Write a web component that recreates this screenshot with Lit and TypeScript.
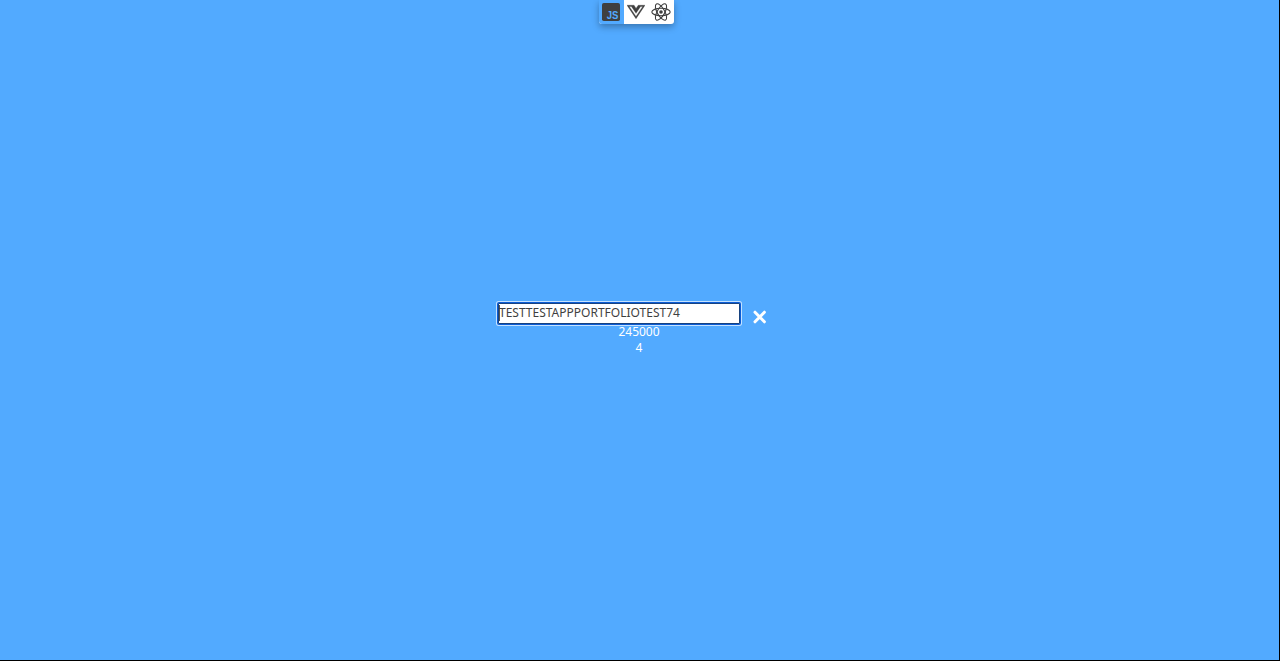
import { LitElement, html, css } from "lit";
import { customElement, property } from "lit/decorators.js";

@customElement("framework-switch")
class FrameworkSwitch extends LitElement {
  static styles = css`
    :host { display: flex; width: 75px; height: 24px; border-radius: 0 0 3px 3px; box-shadow: 0 3px 7px rgba(0, 0, 0, 0.3); background: #fff; }
    .tab { box-sizing: border-box; width: 25px; height: 24px; padding-right: 1px; display: flex; align-items: center; justify-content: center; color: #3f3f3f; }
    .active { background: #52aaff; border-radius: 0 0 0 3px; }
    .js { width: 18px; height: 18px; }
    .vue { width: 18px; height: 18px; }
    .react { width: 20px; height: 20px; }
    .letters { font: bold 10.5px "Liberation Sans", Arial, sans-serif; fill: #52aaff; }
  `;
  render() {
    return html`
      <div class="tab active">
        <svg class="js" viewBox="0 0 18 18"><rect width="18" height="18" rx="1.8" fill="currentColor" /><text class="letters" transform="translate(4.7 16.2) scale(0.91 1)">JS</text></svg>
      </div>
      <div class="tab">
        <svg class="vue" viewBox="0 0 448 512" fill="currentColor" stroke="currentColor" stroke-width="9" preserveAspectRatio="none"><path d="M356.9 64.3H280l-56 88.6-48-88.6H0L224 448 448 64.3h-91.1zm-301.2 32h53.8L224 294.5 338.4 96.3h53.8L224 384.5 55.7 96.3z" /></svg>
      </div>
      <div class="tab">
        <svg class="react" viewBox="-10 -10 20 20" fill="none" stroke="currentColor" stroke-width="1.1">
          <ellipse rx="9.2" ry="3.7" /><ellipse rx="9.2" ry="3.7" transform="rotate(60)" /><ellipse rx="9.2" ry="3.7" transform="rotate(120)" />
          <circle r="1.8" fill="currentColor" stroke="none" />
        </svg>
      </div>`;
  }
}

@customElement("stock-entry")
class StockEntry extends LitElement {
  @property() name = "";
  @property({ type: Number }) amount = 0;
  @property({ type: Number }) count = 0;
  static styles = css`
    :host { display: grid; grid-template-columns: 242px 34px; color: #fff; font: 12px/16px "Noto Sans", sans-serif; text-align: center; }
    .field { box-sizing: border-box; width: 242px; height: 21px; margin: 0; padding: 0 0 2px; border: 1px solid #17427f; border-radius: 1px; outline: none; font: inherit; color: #3f3f3f;
      background: linear-gradient(#555, #555) 0 1px / 1px 16px no-repeat #fff; box-shadow: 0 0 0 1px #0b5cd5, 0 0 0 2px #c4e2ff; }
    .close { width: 14px; height: 14px; margin: 6.6px 0 -3px 12.5px; }
    .values { width: 282px; margin-top: 0.4px; }
  `;
  render() {
    return html`
      <input class="field" .value=${this.name} />
      <svg class="close" viewBox="0 0 14 14" stroke="#fff" stroke-width="3" stroke-linecap="round"><path d="M2 2.2 11.4 11.8M11.4 2.2 2 11.8" /></svg>
      <div class="values"><div>${this.amount}</div><div>${this.count}</div></div>`;
  }
}

@customElement("app-root")
class AppRoot extends LitElement {
  static styles = css`
    :host { box-sizing: border-box; display: flex; flex-direction: column; width: 100%; height: 100vh; background: #52aaff; border: solid #000; border-width: 0 1px 1px 0; }
    .switch { margin-left: 599px; }
    .entry { margin: 279px 0 0 498px; }
  `;
  render() {
    return html`
      <framework-switch class="switch"></framework-switch>
      <stock-entry class="entry" name="TESTTESTAPPPORTFOLIOTEST74" amount="245000" count="4"></stock-entry>`;
  }
}
